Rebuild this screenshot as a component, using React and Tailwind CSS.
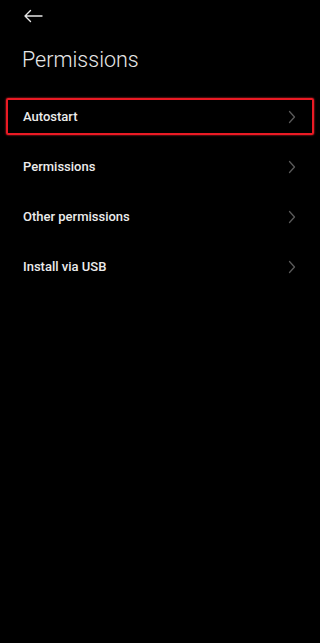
import React from 'react';

const items = ['Autostart', 'Permissions', 'Other permissions', 'Install via USB'];

const Chevron = () => (
    <svg width="8" height="14" viewBox="0 0 8 14" fill="none">
        <path d="M1.5 1.5 L6.5 7 L1.5 12.5" stroke="#5a5a5a" strokeWidth="1.3" strokeLinecap="round" strokeLinejoin="round" />
    </svg>
);

const App = () => {
    return (
        <div className="w-[320px] h-[643px] bg-black text-white font-['Roboto',sans-serif] overflow-hidden">
            {/* Top bar */}
            <div className="h-[32px] pl-[23px] flex items-center">
                <svg width="20" height="14" viewBox="0 0 20 14" fill="none">
                    <path d="M19 7 H2 M7.5 1.5 L2 7 L7.5 12.5" stroke="#e6e6e6" strokeWidth="1.4" strokeLinecap="round" strokeLinejoin="round" />
                </svg>
            </div>

            <h1 className="pl-[22px] mt-[13px] text-[21.5px] leading-[30px] font-light text-[#e8e8e8]">Permissions</h1>

            {/* List */}
            <div className="mt-[23px] px-[6px]">
                {items.map((item, i) => (
                    <div
                        key={item}
                        className={`h-[37px] mb-[13px] flex items-center justify-between pl-[15px] pr-[16px] rounded-[2px] ${
                            i === 0 ? 'border-2 border-[#ea1a24] shadow-[0_0_2px_#ff2a30]' : 'border-2 border-transparent'
                        }`}
                    >
                        <span className="text-[13px] font-medium text-[#ececec]">{item}</span>
                        <Chevron />
                    </div>
                ))}
            </div>
        </div>
    );
};

export default App;
